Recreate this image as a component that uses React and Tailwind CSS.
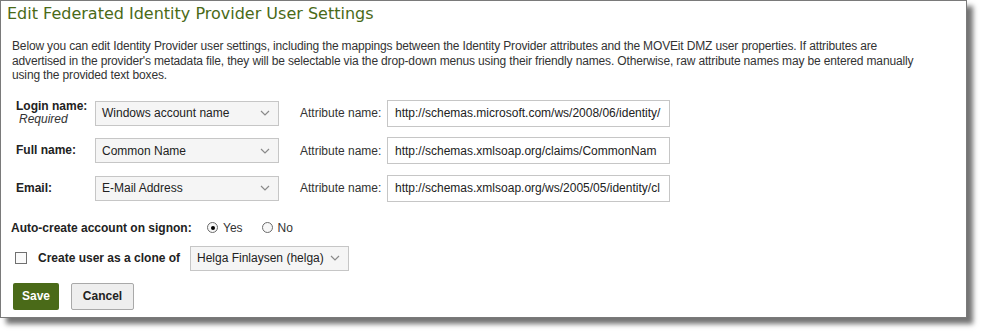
import React from 'react';

const sans = { fontFamily: '"Liberation Sans", Arial, sans-serif' };

function Chevron() {
  return (
    <svg width="10" height="6" viewBox="0 0 10 6" className="shrink-0">
      <polyline points="1,1 5,5 9,1" fill="none" stroke="#8a8a8a" strokeWidth="1.2" />
    </svg>
  );
}

function FakeSelect({ value, width }) {
  return (
    <div
      className={`flex items-center justify-between h-[25px] ${width} border border-[#c6c6c6] bg-[#f5f5f5] pl-[6px] pr-[8px] text-[12px] text-[#222]`}
    >
      <span className="whitespace-nowrap">{value}</span>
      <Chevron />
    </div>
  );
}

function MapRow({ label, sub, select, attr }) {
  return (
    <div className="flex items-center h-[27px]">
      <div className="w-[79px] text-[12px] leading-[13px] text-[#222]">
        <div className="font-bold">{label}</div>
        {sub && <div className="italic pl-[3px] text-[#333]">{sub}</div>}
      </div>
      <FakeSelect value={select} width="w-[184px]" />
      <div className="ml-[21px] w-[87px] text-[12px] text-[#333]">Attribute name:</div>
      <div className="flex items-center w-[283px] h-[27px] border border-[#c6c6c6] bg-white pl-[7px] text-[12px] text-[#222] whitespace-nowrap">
        {attr}
      </div>
    </div>
  );
}

function Radio({ checked, label }) {
  return (
    <div className="flex items-center gap-[5px]">
      <span className="flex items-center justify-center w-[11px] h-[11px] rounded-full border border-[#6b6b6b] bg-[#f7f7f7]">
        {checked && <span className="w-[4px] h-[4px] rounded-full bg-black" />}
      </span>
      <span className="text-[12px] text-[#333]">{label}</span>
    </div>
  );
}

export default function App() {
  return (
    <div className="w-[982px] h-[334px] bg-white" style={sans}>
      <div className="w-[967px] h-[318px] border border-[#7a7a7a] bg-white shadow-[6px_6px_5px_rgba(0,0,0,0.55)]">
        <h1
          className="pt-[3px] pl-[6px] text-[16px] leading-[20px] text-[#4a6a18]"
          style={{ fontFamily: '"DejaVu Sans", Verdana, sans-serif' }}
        >
          Edit Federated Identity Provider User Settings
        </h1>

        <p className="mt-[15px] pl-[11px] pr-[36px] text-[12px] leading-[14.5px] tracking-[-0.15px] text-[#333]">
          Below you can edit Identity Provider user settings, including the mappings between the Identity Provider
          attributes and the MOVEit DMZ user properties. If attributes are advertised in the provider's metadata file,
          they will be selectable via the drop-down menus using their friendly names. Otherwise, raw attribute names
          may be entered manually using the provided text boxes.
        </p>

        <div className="pl-[15px] mt-[17px] flex flex-col gap-[10.5px]">
          <MapRow
            label="Login name:"
            sub="Required"
            select="Windows account name"
            attr="http://schemas.microsoft.com/ws/2008/06/identity/"
          />
          <MapRow
            label="Full name:"
            select="Common Name"
            attr="http://schemas.xmlsoap.org/claims/CommonNam"
          />
          <MapRow
            label="Email:"
            select="E-Mail Address"
            attr="http://schemas.xmlsoap.org/ws/2005/05/identity/cl"
          />
        </div>

        <div className="mt-[18px] pl-[10px] flex items-center h-[16px]">
          <span className="w-[196px] text-[12px] font-bold text-[#222]">Auto-create account on signon:</span>
          <Radio checked label="Yes" />
          <div className="ml-[19px]">
            <Radio label="No" />
          </div>
        </div>

        <div className="mt-[10px] pl-[14px] flex items-center h-[25px]">
          <span className="w-[12px] h-[12px] border border-[#707070] bg-[#fafafa]" />
          <span className="ml-[11px] w-[152px] text-[12px] font-bold text-[#222]">Create user as a clone of</span>
          <FakeSelect value="Helga Finlaysen (helga)" width="w-[159px]" />
        </div>

        <div className="mt-[12px] pl-[12px] flex items-center gap-[12px]">
          <button className="h-[27px] w-[46px] rounded-[2px] bg-[#4a6a18] text-[12px] font-bold text-white">
            Save
          </button>
          <button className="h-[27px] w-[63px] rounded-[2px] border border-[#a9a9a9] bg-[#eeeeee] text-[12px] font-bold text-[#222]">
            Cancel
          </button>
        </div>
      </div>
    </div>
  );
}
